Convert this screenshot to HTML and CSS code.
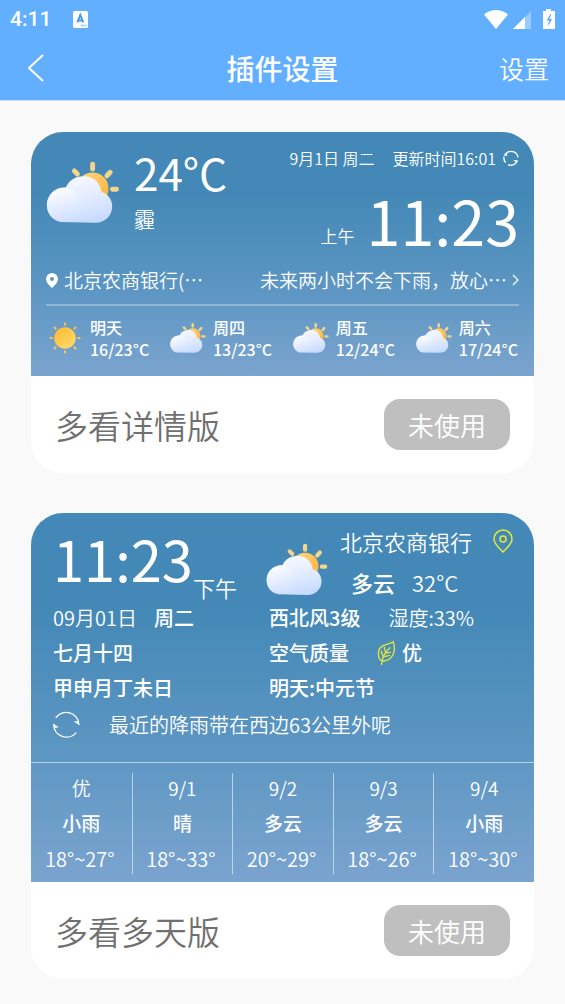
FILE: index.html
```html
<!DOCTYPE html>
<html lang="zh-CN">
<head>
<meta charset="utf-8">
<meta name="viewport" content="width=device-width, initial-scale=1">
<title>插件设置</title>
<link rel="stylesheet" href="styles.css">
</head>
<body>
<svg class="sprite" width="0" height="0" aria-hidden="true">
  <defs>
    <linearGradient id="cloud-fill" x1="0.3" y1="0" x2="0.6" y2="1">
      <stop offset="0" stop-color="#f6f9ff"/>
      <stop offset="0.5" stop-color="#e3ecff"/>
      <stop offset="1" stop-color="#c7dbff"/>
    </linearGradient>
    <linearGradient id="lobe-fill" x1="0.2" y1="0" x2="0.6" y2="1">
      <stop offset="0" stop-color="#ffffff"/>
      <stop offset="0.9" stop-color="#dce7ff" stop-opacity="0.2"/>
    </linearGradient>
    <linearGradient id="sun-fill" x1="0" y1="0" x2="1" y2="1">
      <stop offset="0" stop-color="#ffdc82"/>
      <stop offset="1" stop-color="#ffab35"/>
    </linearGradient>
    <linearGradient id="day-fill" x1="0" y1="0" x2="1" y2="1">
      <stop offset="0" stop-color="#ffb92c"/>
      <stop offset="1" stop-color="#ffdc72"/>
    </linearGradient>
    <symbol id="cloudy" viewBox="63 105 222 190">
      <circle cx="203" cy="188" r="48" fill="url(#sun-fill)"/>
      <path d="M203 115v14M148 135l9 9M246 150l10-11M263 190h12" fill="none" stroke="#f3d68b" stroke-width="15" stroke-linecap="round"/>
      <path d="M108 289C80 285 65 262 65 238C65 208 90 186 122 185C130 165 150 151 176 151C205 151 226 170 230 198C250 205 262 222 262 242C262 270 240 291 212 291Z" fill="url(#cloud-fill)"/>
      <path d="M108 289C80 285 65 262 65 238C65 208 88 185 117 185C148 185 168 208 168 238C168 262 140 289 108 289Z" fill="url(#lobe-fill)"/>
    </symbol>
    <symbol id="sunny" viewBox="0 0 98 98">
      <circle cx="49" cy="49" r="33" fill="url(#day-fill)"/>
      <path d="M49 2v9M49 87v9M2 49h9M87 49h9M15 15l7 7M76 76l7 7M83 15l-7 7M22 76l-7 7" fill="none" stroke="#f2c94e" stroke-width="6"/>
    </symbol>
  </defs>
</svg>

<header class="top">
  <div class="status">
    <span class="clock">4:11</span>
    <svg class="app-mark" viewBox="0 0 15 17" aria-hidden="true">
      <rect width="15" height="17" rx="1.5" fill="#fff"/>
      <path d="M4.300 11.500 7.300 4l3 7.500M5.300 9.500h4.400" fill="none" stroke="#4a9ae8" stroke-width="2"/>
      <path d="M8 14.500h1.500M10.300 14.500h1.200M12.300 14.500h1" stroke="#62afff" stroke-width="1.500"/>
    </svg>
    <svg class="signals" viewBox="0 0 72 20" aria-hidden="true">
      <path d="M0 5.500C3.500 2.500 7.500 1 12 1s8.500 1.500 12 4.500L12 20Z" fill="#fff"/>
      <path d="M29 20 47 2v18Z" fill="#fff" opacity=".35"/>
      <path d="M29 20 41 8v12Z" fill="#fff"/>
      <path d="M62 2V0h5v2h4v18H59V2Z" fill="#fff"/>
      <path d="M66.500 5 62.500 11.500h2.500L64 17.500 68 10h-2.500L67.500 5Z" fill="#62afff"/>
    </svg>
  </div>
  <div class="bar">
    <button class="back" type="button" aria-label="返回">
      <svg viewBox="0 0 16 28" aria-hidden="true"><path d="M15 1 1 14l14 13" fill="none" stroke="#fff" stroke-width="2"/></svg>
    </button>
    <h1 class="title">插件设置</h1>
    <button class="settings" type="button">设置</button>
  </div>
</header>

<main class="list">
  <section class="card">
    <div class="sky detail">
      <div class="now">
        <svg class="cloud-big"><use href="#cloudy"/></svg>
        <div class="reading">
          <span class="degrees">24°C</span>
          <span class="condition">霾</span>
        </div>
        <div class="moment">
          <div class="updated">
            <span>9月1日 周二</span>
            <span>更新时间16:01</span>
            <svg class="refresh-small" viewBox="0 0 48 48" aria-hidden="true">
              <path d="M8 12A21 21 0 0 1 45 22M3 20A21 21 0 0 0 8 38M15 44A21 21 0 0 0 43 32" fill="none" stroke="#fff" stroke-width="4"/>
              <path d="M4 19 5 9l10 7ZM44 31l-13-1 9 9Z" fill="#fff"/>
            </svg>
          </div>
          <div class="time-row"><span class="half">上午</span><span class="time-large">11:23</span></div>
        </div>
      </div>
      <div class="place-row">
        <svg class="pin-small" viewBox="0 0 12 15" aria-hidden="true"><path fill="#fff" fill-rule="evenodd" d="M6 0a6 6 0 0 1 6 6C12 9.500 9 12 6 15 3 12 0 9.500 0 6a6 6 0 0 1 6-6Zm0 4a2 2 0 1 0 0 4 2 2 0 0 0 0-4Z"/></svg>
        <span>北京农商银行(⋯</span>
        <span class="hint">未来两小时不会下雨，放心⋯</span>
        <svg class="more" viewBox="0 0 7 12" aria-hidden="true"><path d="m1 1 5 5-5 5" fill="none" stroke="#fff" stroke-width="1.300"/></svg>
      </div>
      <ul class="forecast">
        <li><svg class="day-icon"><use href="#sunny"/></svg><span>明天<br>16/23°C</span></li>
        <li><svg class="day-icon"><use href="#cloudy"/></svg><span>周四<br>13/23°C</span></li>
        <li><svg class="day-icon"><use href="#cloudy"/></svg><span>周五<br>12/24°C</span></li>
        <li><svg class="day-icon"><use href="#cloudy"/></svg><span>周六<br>17/24°C</span></li>
      </ul>
    </div>
    <div class="foot">
      <h2 class="name">多看详情版</h2>
      <button class="use" type="button">未使用</button>
    </div>
  </section>

  <section class="card">
    <div class="sky multi">
      <div class="facts">
        <div class="big-clock"><span class="time-medium">11:23</span><span class="half-medium">下午</span></div>
        <div class="here">
          <svg class="cloud-mid"><use href="#cloudy"/></svg>
          <div class="here-text">
            <div class="here-line">北京农商银行
              <svg class="pin-outline" viewBox="0 0 20 24" aria-hidden="true"><path d="M10 1a9 9 0 0 1 9 9c0 5-5 9-9 13-4-4-9-8-9-13a9 9 0 0 1 9-9Z" fill="none" stroke="#e4e83a" stroke-width="1.500"/><circle cx="10" cy="10" r="3" fill="none" stroke="#e4e83a" stroke-width="1.500"/></svg>
            </div>
            <div class="here-line weather"><b>多云</b><span>32°C</span></div>
          </div>
        </div>
        <div class="fact"><span>09月01日</span><b>周二</b></div>
        <div class="fact wide"><b>西北风3级</b><span>湿度:33%</span></div>
        <div class="fact"><b>七月十四</b></div>
        <div class="fact wide"><b>空气质量</b>
          <span class="quality"><svg class="leaf" viewBox="0 0 50 70" aria-hidden="true"><path d="M46 2C34 12 4 8 3 34c-1 14 4 24 11 24C34 60 58 42 46 2ZM12 69 C13 50 20 36 36 20M17 46 11 30M24 34 20 19M16 47l19-5M23 35l14-2" fill="none" stroke="#dfe43c" stroke-width="4" stroke-linecap="round"/></svg><b>优</b></span>
        </div>
        <div class="fact"><b>甲申月丁未日</b></div>
        <div class="fact"><b>明天:中元节</b></div>
      </div>
      <div class="rain">
        <svg class="refresh-large" viewBox="0 0 80 80" aria-hidden="true">
          <path d="M8 20A38 38 0 0 1 77 40M2 40A38 38 0 0 0 69 64" fill="none" stroke="#fff" stroke-width="4"/>
          <path d="M79 42 61 31l13-1ZM0 37l17 11-13 2Z" fill="#fff"/>
        </svg>
        <span>最近的降雨带在西边63公里外呢</span>
      </div>
      <ul class="days">
        <li><span>优</span><b>小雨</b><span class="range">18°~27°</span></li>
        <li><span>9/1</span><b>晴</b><span class="range">18°~33°</span></li>
        <li><span>9/2</span><b>多云</b><span class="range">20°~29°</span></li>
        <li><span>9/3</span><b>多云</b><span class="range">18°~26°</span></li>
        <li><span>9/4</span><b>小雨</b><span class="range">18°~30°</span></li>
      </ul>
    </div>
    <div class="foot">
      <h2 class="name">多看多天版</h2>
      <button class="use" type="button">未使用</button>
    </div>
  </section>
</main>
</body>
</html>
```
FILE: styles.css
```css
* {
  box-sizing: border-box;
}

body {
  margin: 0;
  background: #f9f9f9;
  color: #fff;
  font-family: "Noto Sans CJK SC", sans-serif;
  font-weight: 350;
}

button {
  padding: 0;
  border: 0;
  background: none;
  color: inherit;
  font-family: inherit;
  font-weight: 350;
}

h1, h2, ul {
  margin: 0;
  padding: 0;
  font-weight: 350;
  list-style: none;
}

b {
  font-weight: 500;
}

svg {
  display: block;
  flex: none;
}

.sprite {
  position: absolute;
}

.top {
  background: #62afff;
  border-bottom: 1px solid #c5e0fb;
}

.status {
  display: flex;
  align-items: center;
  height: 38px;
  padding: 0 10px;
}

.clock {
  font: 500 21px/38px Roboto, sans-serif;
}

.app-mark {
  width: 15px;
  height: 17px;
  margin-left: 22px;
}

.signals {
  width: 72px;
  height: 20px;
  margin: 0 -1px 0 auto;
}

.bar {
  display: grid;
  grid-template-columns: 1fr auto 1fr;
  align-items: center;
  padding: 10px 16px 12px;
}

.back {
  justify-self: start;
  padding-left: 12px;
}

.back svg {
  width: 16px;
  height: 28px;
}

.title {
  font-size: 28px;
  font-weight: 500;
  line-height: 40px;
}

.settings {
  justify-self: end;
  font-size: 25px;
  line-height: 40px;
}

.list {
  display: grid;
  gap: 40px;
  padding: 31px 31px 24px;
}

.card {
  overflow: hidden;
  border-radius: 32px;
  background: #fff;
}

.sky {
  background: linear-gradient(#4388b6 25%, #5b95c2 62%, #7ba4cf);
}

.detail {
  padding: 16px 15px;
}

.now {
  display: flex;
}

.cloud-big {
  width: 74px;
  height: 63px;
  margin-top: 13px;
}

.reading {
  display: grid;
  align-content: start;
  margin-left: 14px;
}

.degrees {
  font-size: 44px;
  font-weight: 400;
  line-height: 48px;
}

.condition {
  font-size: 21px;
  line-height: 44px;
}

.moment {
  margin-left: auto;
}

.updated {
  display: flex;
  align-items: center;
  justify-content: flex-end;
  gap: 18px;
  font-size: 16px;
  line-height: 20px;
}

.refresh-small {
  width: 16px;
  height: 16px;
  margin-left: -11px;
}

.time-row {
  display: flex;
  align-items: flex-end;
  justify-content: flex-end;
  gap: 12px;
  margin-top: 23px;
}

.half {
  font-size: 17px;
  line-height: 26px;
}

.time-large {
  font-size: 61px;
  font-weight: 400;
  line-height: 58px;
}

.place-row {
  display: flex;
  align-items: center;
  margin-top: 18px;
  padding-bottom: 11px;
  border-bottom: 2px solid rgb(255 255 255 / 30%);
  font-size: 19px;
  line-height: 26px;
}

.pin-small {
  width: 12px;
  height: 15px;
  margin-right: 6px;
}

.hint {
  margin-left: auto;
}

.more {
  width: 7px;
  height: 12px;
  margin-left: 5px;
}

.forecast {
  display: flex;
  justify-content: space-between;
  padding: 10px 1px 0;
}

.forecast li {
  display: flex;
  align-items: center;
  gap: 7px;
  font-size: 16px;
  font-weight: 500;
  line-height: 22px;
}

.day-icon {
  width: 36px;
  height: 32px;
}

.foot {
  display: flex;
  align-items: center;
  justify-content: space-between;
  padding: 23px 24px;
}

.name {
  color: #707070;
  font-size: 33px;
  line-height: 48px;
}

.use {
  width: 126px;
  border-radius: 16px;
  background: #bfbfbf;
  font-size: 26px;
  line-height: 51px;
}

.facts {
  display: grid;
  grid-template-columns: 216px 1fr;
  grid-template-rows: 87px;
  grid-auto-rows: 35px;
  align-items: center;
  padding-left: 22px;
  font-size: 20px;
}

.big-clock {
  display: flex;
  align-items: flex-end;
  align-self: end;
}

.time-medium {
  font-size: 56px;
  font-weight: 400;
  line-height: 84px;
}

.half-medium {
  font-size: 22px;
  line-height: 26px;
}

.here {
  display: flex;
  align-items: center;
  align-self: end;
  margin-left: -3px;
  padding-right: 21px;
}

.cloud-mid {
  width: 62px;
  height: 53px;
  margin-top: 20px;
}

.here-text {
  flex: 1;
  margin-left: 12px;
}

.here-line {
  display: flex;
  align-items: center;
  justify-content: space-between;
  font-size: 22px;
  line-height: 46px;
}

.here-line.weather {
  justify-content: flex-start;
  gap: 17px;
  padding-left: 11px;
  line-height: 36px;
}

.pin-outline {
  width: 20px;
  height: 24px;
}

.fact {
  display: flex;
  align-items: center;
  gap: 17px;
  line-height: 35px;
}

.fact.wide {
  gap: 28px;
}

.quality {
  display: flex;
  align-items: center;
  gap: 7px;
}

.leaf {
  width: 18px;
  height: 24px;
}

.rain {
  display: flex;
  align-items: center;
  gap: 29px;
  padding: 0 22px 18px;
  font-size: 20px;
  line-height: 39px;
}

.refresh-large {
  width: 27px;
  height: 27px;
}

.days {
  display: grid;
  grid-template-columns: repeat(5, 1fr);
  padding: 10px 0 8px;
  border-top: 1px solid rgb(255 255 255 / 55%);
}

.days li {
  display: grid;
  justify-items: center;
  border-left: 1px solid rgb(255 255 255 / 55%);
  font-size: 19px;
  line-height: 30px;
}

.days li:first-child {
  border-left: 0;
}

.days b {
  line-height: 40px;
}

.days .range {
  padding-right: 3px;
  font-size: 20px;
  line-height: 31px;
}
```
